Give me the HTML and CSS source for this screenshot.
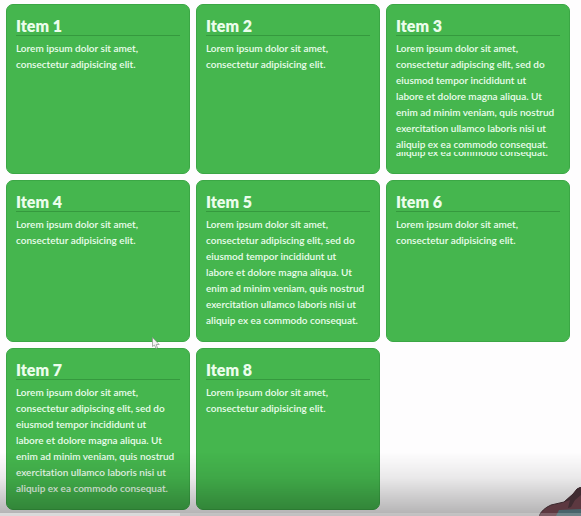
FILE: index.html
```html
<!DOCTYPE html>
<html lang="en">
<head>
<meta charset="utf-8">
<title>Grid items</title>
<link rel="stylesheet" href="styles.css">
</head>
<body>
<main class="grid">
  <article class="card"><h2>Item 1</h2><p>Lorem ipsum dolor sit amet,<br>consectetur adipisicing elit.</p></article>
  <article class="card"><h2>Item 2</h2><p>Lorem ipsum dolor sit amet,<br>consectetur adipisicing elit.</p></article>
  <article class="card"><h2>Item 3</h2><p>Lorem ipsum dolor sit amet,<br>consectetur adipiscing elit, sed do<br>eiusmod tempor incididunt ut<br>labore et dolore magna aliqua. Ut<br>enim ad minim veniam, quis nostrud<br>exercitation ullamco laboris nisi ut<br>aliquip ex ea commodo consequat.</p><p class="cut">aliquip ex ea commodo consequat.</p></article>
  <article class="card"><h2>Item 4</h2><p>Lorem ipsum dolor sit amet,<br>consectetur adipisicing elit.</p></article>
  <article class="card"><h2>Item 5</h2><p>Lorem ipsum dolor sit amet,<br>consectetur adipiscing elit, sed do<br>eiusmod tempor incididunt ut<br>labore et dolore magna aliqua. Ut<br>enim ad minim veniam, quis nostrud<br>exercitation ullamco laboris nisi ut<br>aliquip ex ea commodo consequat.</p></article>
  <article class="card"><h2>Item 6</h2><p>Lorem ipsum dolor sit amet,<br>consectetur adipisicing elit.</p></article>
  <article class="card"><h2>Item 7</h2><p>Lorem ipsum dolor sit amet,<br>consectetur adipiscing elit, sed do<br>eiusmod tempor incididunt ut<br>labore et dolore magna aliqua. Ut<br>enim ad minim veniam, quis nostrud<br>exercitation ullamco laboris nisi ut<br>aliquip ex ea commodo consequat.</p></article>
  <article class="card"><h2>Item 8</h2><p>Lorem ipsum dolor sit amet,<br>consectetur adipisicing elit.</p></article>
</main>
<svg class="pointer" width="8" height="12" viewBox="0 0 8 12" aria-hidden="true"><path d="M.5.5v9l2-1.500 1.500 3.500 1.500-.7-1.300-3.300h3z" fill="#f4f4f4" stroke="#8a928a" stroke-width=".7"/></svg>
<div class="shade"></div>
<svg class="presenter" width="42" height="29" viewBox="0 0 42 29" aria-hidden="true">
  <path d="M0 29Q3 22 12 18L25 15 34 7 38 2 42 0V29z" fill="#5c3840"/>
  <path d="M25 15L34 7 38 2 42 0V8L36 13 32 20 29 21 31 13z" fill="#3f2b31"/>
  <path d="M0 29Q3 22 12 18L25 15 34 7 38 2 42 0" fill="none" stroke="#39272c"/>
  <path d="M17 29L20 23 42 22V29z" fill="#47646b"/>
</svg>
<div class="track"><div class="buffer"></div></div>
</body>
</html>
```

FILE: styles.css
```css
* {
  box-sizing: border-box;
}

body {
  margin: 0;
  background: #fefdfe;
  color: #ebfdec;
  font-family: Lato, "Liberation Sans", sans-serif;
  font-variant-ligatures: none;
}

.grid {
  display: grid;
  grid-template-columns: repeat(3, 1fr);
  gap: 6px;
  padding: 4px 11px 6px 6px;
}

.card {
  padding: 11px 9px 13px;
  border: 1px solid #3ba745;
  border-radius: 7px;
  background: #45b64e;
}

.card h2 {
  margin: 0 0 4px;
  border-bottom: 1px solid #35993e;
  font-size: 16px;
  font-weight: 800;
  line-height: 19px;
}

.card p {
  margin: 0;
  font-size: 10px;
  font-weight: 600;
  line-height: 16px;
}

.card .cut {
  display: flex;
  align-items: flex-end;
  height: 8px;
  overflow: hidden;
}

.shade {
  position: fixed;
  inset: auto 0 0;
  height: 64px;
  background: linear-gradient(transparent, rgba(0, 0, 0, 0.08) 40%, rgba(0, 0, 0, 0.3));
}

.pointer {
  position: fixed;
  left: 152px;
  top: 337px;
}

.presenter {
  position: fixed;
  right: 0;
  bottom: 0;
}

.track {
  position: fixed;
  inset: auto 0 0;
  height: 3px;
  background: rgba(255, 255, 255, 0.2);
}

.buffer {
  width: 31%;
  height: 3px;
  background: rgba(255, 255, 255, 0.4);
}
```
